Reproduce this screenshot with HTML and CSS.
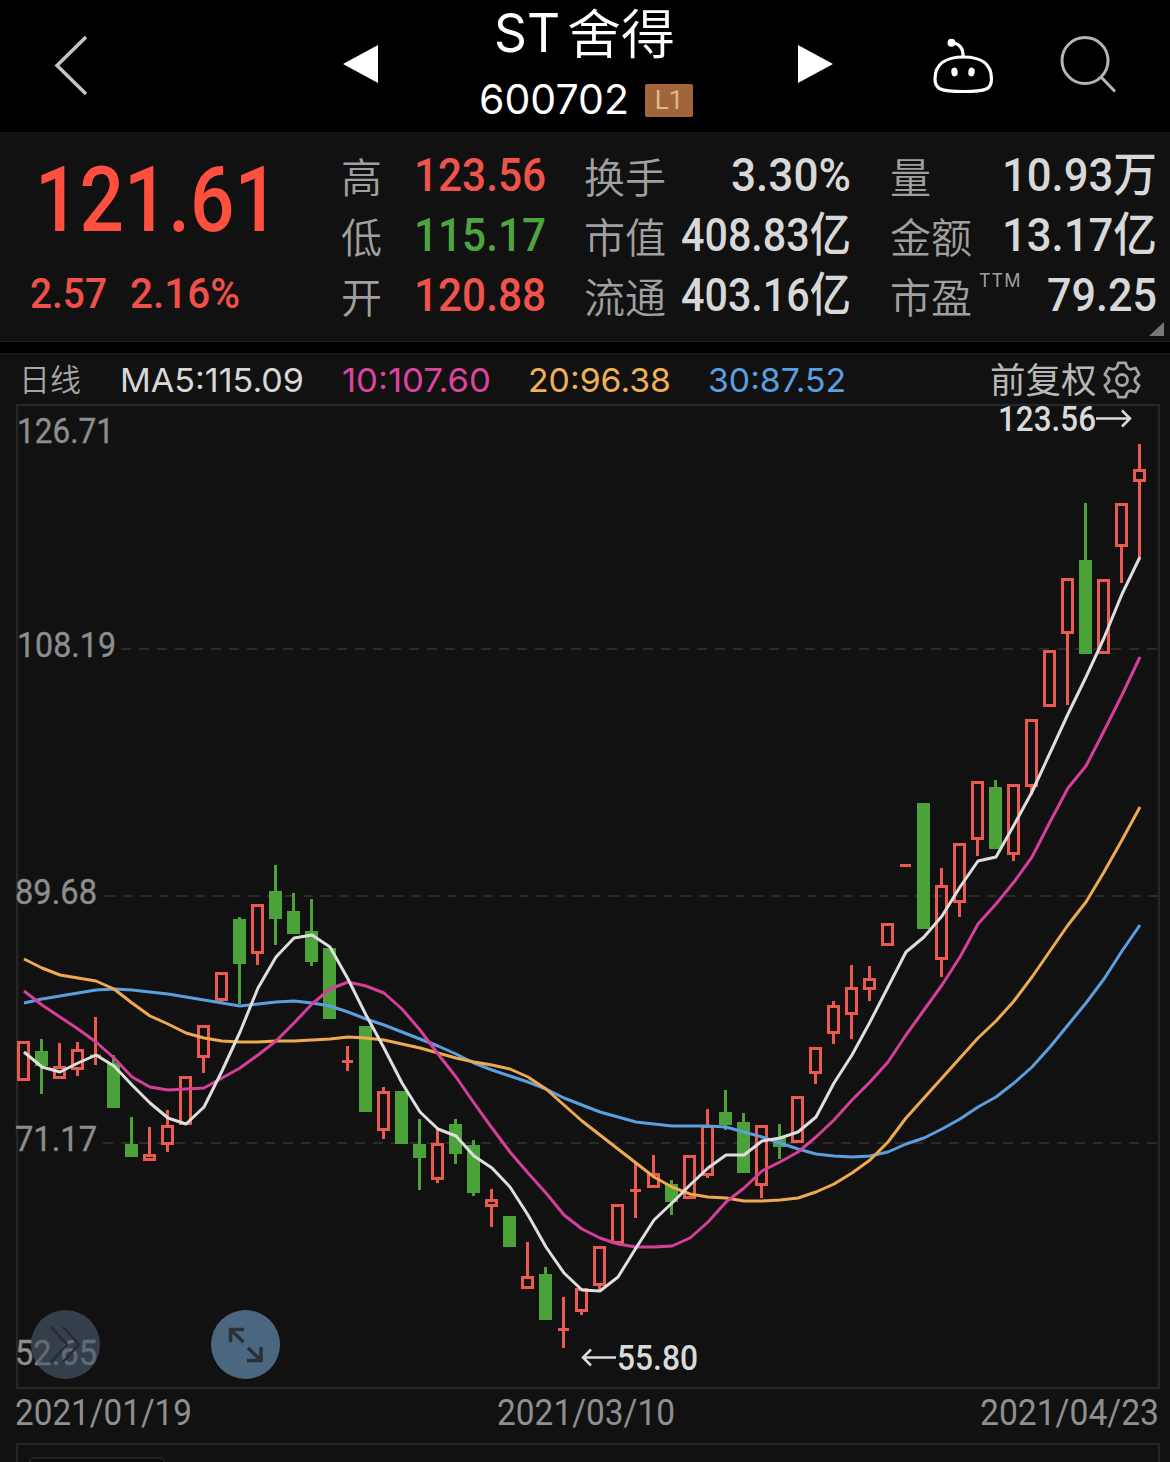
FILE: index.html
```
<!doctype html>
<html lang="zh">
<head>
<meta charset="utf-8">
<title>ST舍得 600702</title>
<link rel="stylesheet" href="styles.css">
</head>

<body>
<div class="header">
	<svg class="back" width="34" height="60" viewBox="0 0 34 60"><path d="M32 2L3 30.500L32 59" /></svg>
	<svg class="prev" width="36" height="38" viewBox="0 0 36 38"><path d="M0 19L35 0V38Z" /></svg>
	<div class="title">
		<h1><span class="fit" data-w="66">ST</span><span class="fit cn" data-w="108">舍得</span></h1>
		<p><span class="fit code" data-w="150">600702</span><em>L1</em></p>
	</div>
	<svg class="next" width="36" height="38" viewBox="0 0 36 38"><path d="M36 19L1 0V38Z" /></svg>
	<svg class="robot" width="63" height="58" viewBox="0 0 63 58">
		<path d="M19.500 6C27 6 31.500 11 31 20" />
		<path d="M31.500 20C49 20 59.500 27 59.500 42C59.500 52 55 54.500 31.500 54.500C8 54.500 3 52 3 42C3 27 14 20 31.500 20Z" />
		<circle cx="19.500" cy="5.800" r="4" />
		<ellipse cx="22.500" cy="35" rx="3.200" ry="4.400" transform="rotate(-8 22.500 35)" />
		<ellipse cx="39.500" cy="35" rx="3.200" ry="4.400" transform="rotate(8 39.500 35)" />
	</svg>
	<svg class="search" width="58" height="58" viewBox="0 0 58 58"><circle cx="25" cy="25.500" r="23" /><path d="M41 42L55 56.500" /></svg>
</div>

<div class="quote">
	<div class="price">
		<div class="now"><span class="fit" data-w="244">121.61</span></div>
		<div class="chg"><span class="fit" data-w="77">2.57</span><span class="fit" data-w="110">2.16%</span></div>
	</div>
	<ul class="c1">
		<li><b>高</b><span class="fit red" data-w="132">123.56</span></li>
		<li><b>低</b><span class="fit green" data-w="132">115.17</span></li>
		<li><b>开</b><span class="fit red" data-w="132">120.88</span></li>
	</ul>
	<ul class="c2">
		<li><b>换手</b><span class="fit" data-w="120">3.30%</span></li>
		<li><b>市值</b><span class="fit" data-w="170">408.83亿</span></li>
		<li><b>流通</b><span class="fit" data-w="170">403.16亿</span></li>
	</ul>
	<ul class="c3">
		<li><b>量</b><span class="fit" data-w="155">10.93万</span></li>
		<li><b>金额</b><span class="fit" data-w="155">13.17亿</span></li>
		<li><b>市盈<sup>TTM</sup></b><span class="fit" data-w="110">79.25</span></li>
	</ul>
	<i class="corner"></i>
</div>

<div class="main">
	<div class="ma">
		<span class="day">日线</span>
		<span class="fit ma5" data-w="184">MA5:115.09</span>
		<span class="fit ma10" data-w="149">10:107.60</span>
		<span class="fit ma20" data-w="143">20:96.38</span>
		<span class="fit ma30" data-w="138">30:87.52</span>
		<span class="fq">前复权</span>
		<svg class="gear" width="38" height="38" viewBox="0 0 38 38">
			<path d="M14.200 5.800L15.300 1.800H22.700L23.800 5.800Q25.500 8.500 28 8.300L32.400 7L36.100 13.400L32.800 16.600Q31 19 32.800 21.400L36.100 24.600L32.400 31L28 29.700Q25.500 29.500 23.800 32.200L22.700 36.200H15.300L14.200 32.200Q12.500 29.500 10 29.700L5.600 31L1.900 24.600L5.200 21.400Q7 19 5.200 16.600L1.900 13.400L5.600 7L10 8.300Q12.500 8.500 14.200 5.800Z" />
			<circle cx="19" cy="19" r="5.500" />
		</svg>
	</div>
	<svg id="chart" width="1170" height="989" viewBox="0 401 1170 989"></svg>
	<div class="dates">
		<span class="fit" data-w="177">2021/01/19</span>
		<span class="fit" data-w="178">2021/03/10</span>
		<span class="fit" data-w="179">2021/04/23</span>
	</div>
	<div class="vol"><div class="tab"></div></div>
</div>

<script>
// [涨跌, 实体上, 实体下, 最高, 最低]
var k=[
	['r',1041,1081],['g',1051,1066,1039,1094],['r',1066,1079,1043],['r',1049,1070,1042,1076],['d',1055,1057,1017,1065],
	['g',1063,1108,1055],['g',1144,1157,1117],['r',1154,1161,1127],['r',1125,1145,1110,1152],['r',1076,1125],
	['r',1025,1058,1025,1073],['r',972,1001,972,1004],['g',919,964,917,1004],['r',904,954,904,965],['g',891,919,865,945],
	['g',911,934,893],['g',931,962,899,966],['g',948,1019],['d',1060,1063,1046,1071],['g',1026,1112],
	['r',1091,1131,1087,1139],['g',1091,1144],['g',1144,1158,1119,1190],['r',1143,1180,1129,1183],['g',1124,1154,1119,1164],
	['g',1145,1193,1140,1196],['r',1199,1207,1189,1227],['g',1216,1247],['r',1276,1289,1242],['g',1274,1320,1267],
	['d',1328,1331,1297,1348],['r',1288,1312,1288,1315],['r',1246,1286,1246,1291],['r',1204,1244],['d',1189,1192,1163,1218],
	['r',1173,1188,1155],['g',1184,1202,1180,1215],['r',1155,1199],['r',1125,1176,1109,1178],['g',1112,1125,1090,1130],
	['g',1122,1173,1113],['r',1125,1186,1125,1198],['g',1138,1147,1124,1159],['r',1096,1143],['r',1047,1074,1047,1084],
	['r',1005,1034,1001,1044],['r',987,1015,965,1039],['r',978,990,966,1001],['r',923,946],['d',864,867,866,866],
	['g',803,929],['r',885,960,868,977],['r',843,903,843,917],['r',781,840,781,856],['g',787,849,780],
	['r',784,855,784,861],['r',719,787,719,795],['r',650,707],['r',578,634,578,705],['g',560,654,503],
	['r',579,654],['r',503,547,503,583],['r',469,482,444,557]
];
var lines={
	ma30:[1003,999,996,993,990,989,990,992,994,997,1000,1003,1006,1004,1002,1001,1003,1006,1012,1019,1025,1032,1039,1046,1054,1063,1070,1076,1082,1089,1098,1105,1112,1117,1122,1124,1126,1126,1126,1127,1132,1137,1143,1149,1154,1156,1157,1156,1152,1144,1138,1129,1119,1107,1097,1083,1067,1047,1025,1003,979,951,925],
	ma20:[959,968,975,978,981,989,1003,1016,1024,1033,1038,1041,1042,1042,1041,1041,1040,1039,1037,1038,1040,1044,1048,1053,1058,1062,1065,1069,1077,1089,1105,1121,1135,1149,1163,1177,1187,1194,1197,1198,1201,1201,1200,1198,1192,1184,1173,1160,1142,1118,1098,1078,1058,1038,1021,1001,977,951,925,902,872,840,807],
	ma10:[991,1005,1017,1029,1042,1058,1077,1087,1090,1089,1088,1078,1068,1055,1041,1023,1004,989,982,986,993,1009,1030,1054,1077,1103,1128,1152,1173,1193,1215,1229,1238,1244,1247,1247,1246,1238,1222,1202,1188,1171,1162,1152,1137,1120,1100,1082,1062,1035,1010,985,957,924,904,882,857,822,788,766,731,695,657],
	ma5:[1052,1067,1072,1063,1055,1066,1085,1103,1118,1124,1107,1071,1032,988,957,938,935,947,979,1015,1048,1083,1112,1129,1136,1156,1168,1187,1215,1247,1273,1290,1291,1277,1248,1220,1203,1185,1168,1155,1155,1141,1138,1132,1117,1083,1055,1022,987,952,937,916,887,861,857,825,792,753,714,677,638,594,557]
};
var s='<rect class="frame" x="17" y="405" width="1142" height="983" />';

function label(cls,x,y,w,t){
	return '<text class="'+cls+'" x="'+x+'" y="'+y+'" textLength="'+w+'" lengthAdjust="spacingAndGlyphs">'+t+'</text>';
}
function grid(x,y){
	return '<path class="grid" d="M'+x+' '+y+'H1158" />';
}
s+=grid(121,649)+grid(105,896)+grid(103,1143);
s+=label('y',17,443,97,'126.71')+label('y',17,657,99,'108.19')+label('y',15,904,82,'89.68')+label('y',15,1151,82,'71.17')+label('y',15,1365,82,'52.65');

for(var i=0;i<k.length;i++){
	var x=23.5+18*i, c=k[i][0], y1=k[i][1], y2=k[i][2], hi=k[i][3]||y1, lo=k[i][4]||y2;
	if(c=='r'){
		s+='<path class="up" d="M'+x+' '+hi+'V'+y1+'M'+x+' '+y2+'V'+lo+'" />';
		s+='<rect class="up" x="'+(x-5)+'" y="'+(y1+1.5)+'" width="10" height="'+(y2-y1-3)+'" />';
	}
	else if(c=='g'){
		s+='<path class="down" d="M'+x+' '+hi+'V'+lo+'" />';
		s+='<rect class="down" x="'+(x-6.5)+'" y="'+y1+'" width="13" height="'+(y2-y1)+'" />';
	}
	else{
		s+='<path class="up" d="M'+x+' '+hi+'V'+lo+'M'+(x-5.5)+' '+(y1+y2)/2+'h11" />';
	}
}
for(var n in lines){
	var p=[];
	for(var i=0;i<lines[n].length;i++){
		p.push((24+18*i)+','+lines[n][i]);
	}
	s+='<polyline class="line '+n+'" points="'+p.join(' ')+'" />';
}
s+=label('mark',998,431,98,'123.56')+'<path class="arrow" d="M1096 418.5H1130M1122 410.500L1130 418.500L1122 426.500" />';
s+=label('mark',617,1370,81,'55.80')+'<path class="arrow" d="M616 1357.500H583M591 1349.500L583 1357.500L591 1365.500" />';
s+='<circle class="btn1" cx="65.500" cy="1344.500" r="34.500" /><path class="ico1" d="M51 1327L67 1344.500L51 1362M63 1327L79 1344.500L63 1362" />';
s+='<circle class="btn2" cx="245.500" cy="1344.500" r="34.500" /><path class="ico2" d="M230.500 1342V1329.500H244M231 1330L243.500 1342M261 1347V1360.500H247M260.500 1360L248 1348" />';
document.getElementById('chart').innerHTML=s;

// 数字压缩到指定宽度
var aFit=document.querySelectorAll('.fit');
for(var i=0;i<aFit.length;i++){
	var w=aFit[i].getAttribute('data-w');
	var r=document.createRange();
	r.selectNodeContents(aFit[i]);
	var real=r.getBoundingClientRect().width;
	aFit[i].style.width=w+'px';
	aFit[i].style.transform='scaleX('+w/real+')';
}
</script>
</body>
</html>
```
FILE: styles.css
```
*{margin:0; padding:0; list-style:none; box-sizing:border-box;}
body{width:1170px; height:1462px; background:#000; color:#d8d8d8; overflow:hidden; font-family:Roboto,"Noto Sans CJK SC",sans-serif;}
svg{display:block; flex:none; overflow:visible;}
.fit{display:block; flex:none; white-space:nowrap; transform-origin:0 50%;}

.header{height:132px; display:flex; align-items:flex-start; padding-left:54px; color:#fff;}
.header path,.header circle{fill:none; stroke:#fff; stroke-width:3.2;}
.back{margin:35px 255px 0 0;}
.header .back path{stroke:#c4c4c4; stroke-width:3.5;}
.prev,.next{margin-top:45px;}
.header .prev path,.header .next path{fill:#fff; stroke:none;}
.title{width:418px; font-family:Inter,"Noto Sans CJK SC",sans-serif;}
.title h1{display:flex; height:66px; padding-left:115px; font-size:53px; line-height:67px; font-weight:400;}
.title .cn{margin-left:7px; font-weight:350; line-height:71px;}
.title p{display:flex; height:66px; padding:0 0 0 100px; font-size:41px; line-height:67px;}
.title em{width:48px; height:33px; margin:18px 0 0 16px; background:#a0663a; border-radius:2px; color:#dcb98e; font:normal 26px/33px Roboto,sans-serif; text-align:center;}
.robot{margin:37px 0 0 99px;}
.header .robot circle,.robot ellipse{fill:#fff; stroke:none;}
.search{margin:35px 0 0 65px;}
.header .search path,.header .search circle{stroke:#b4b4b4; stroke-width:3;}

.quote{height:210px; padding-top:13px; display:flex; background:#111; border-bottom:1px solid #1d1d1d; position:relative;}
.price{width:342px; color:#fe4f3f; font-weight:500;}
.now{height:110px; padding-left:35px; font-size:91px; line-height:110px;}
.chg{display:flex; gap:23px; padding-left:30px; font-size:42px; line-height:77px; color:#f0504a;}
.quote li{height:60px; display:flex; justify-content:space-between; font-size:47px; line-height:60px; font-weight:500;}
.quote li b{font:350 41px/60px "Noto Sans CJK SC",sans-serif; color:#a0a0a0; white-space:nowrap; position:relative;}
.quote sup{position:absolute; left:89px; top:-4px; font:18px/40px Inter,sans-serif; letter-spacing:1px;}
.c1{width:205px; margin-left:-1px;}
.c2{width:267px; margin-left:38px;}
.c3{width:267px; margin-left:39px;}
.red{color:#f0534a;}
.green{color:#4ea540;}
.corner{position:absolute; right:6px; bottom:5px; border-left:15px solid transparent; border-bottom:14px solid #777;}

.main{height:1109px; margin-top:11px; background:#111; border-top:1px solid #1d1d1d;}
.ma{height:47px; display:flex; align-items:center; padding:4px 0 0 19px; font:33px/44px Inter,sans-serif;}
.day{width:101px; font:350 31px/44px "Noto Sans CJK SC",sans-serif; color:#a6a6a6; margin-top:-4px;}
.ma .ma5{margin-right:38px; color:#d8d8d8;}
.ma .ma10{margin-right:37px; color:#dc459f;}
.ma .ma20{margin-right:37px; color:#eeb058;}
.ma .ma30{color:#5a9fe0;}
.fq{margin:-4px 0 0 144px; font:400 35.500px/44px "Noto Sans CJK SC",sans-serif; color:#b8b8b8;}
.gear{margin:1px 0 0 6px;}
.gear path,.gear circle{fill:none; stroke:#a4a4a4; stroke-width:2.8; stroke-linejoin:round;}

#chart text{font-family:Roboto,sans-serif; font-size:35px; font-weight:500;}
#chart .y{fill:#8d8d8d; font-weight:400; stroke:#8d8d8d; stroke-width:.4;}
#chart .mark{fill:#dadada;}
.frame{fill:none; stroke:#262626; stroke-width:2.5;}
.grid{stroke:#2b2b2b; stroke-width:2; stroke-dasharray:10 8;}
.up{fill:none; stroke:#ea5a50; stroke-width:3;}
.down{fill:#4ba238;}
path.down{stroke:#4ba238; stroke-width:3;}
.line{fill:none; stroke-width:3; stroke-linejoin:round;}
.line.ma5{stroke:#dedede;}
.line.ma10{stroke:#d63e9b;}
.line.ma20{stroke:#efaa50;}
.line.ma30{stroke:#5a9fe0;}
.arrow{fill:none; stroke:#dadada; stroke-width:2.5;}
.btn1{fill:rgba(74,88,108,.65);}
.btn2{fill:#4b6780;}
.ico1{fill:none; stroke:#252c36; stroke-width:2.5;}
.ico2{fill:none; stroke:#2a3038; stroke-width:3.5;}

.dates{height:52px; display:flex; justify-content:space-between; padding:0 11px 0 15px; font-size:36px; line-height:47px; color:#8f8f8f;}
.vol{height:30px; margin:1px 10px 0 16px; padding:12px 0 0 11px; border:2.500px solid #262626; border-bottom:0;}
.tab{width:136px; height:20px; background:#0a0a0a; border:2px solid #222; border-radius:5px;}
```
